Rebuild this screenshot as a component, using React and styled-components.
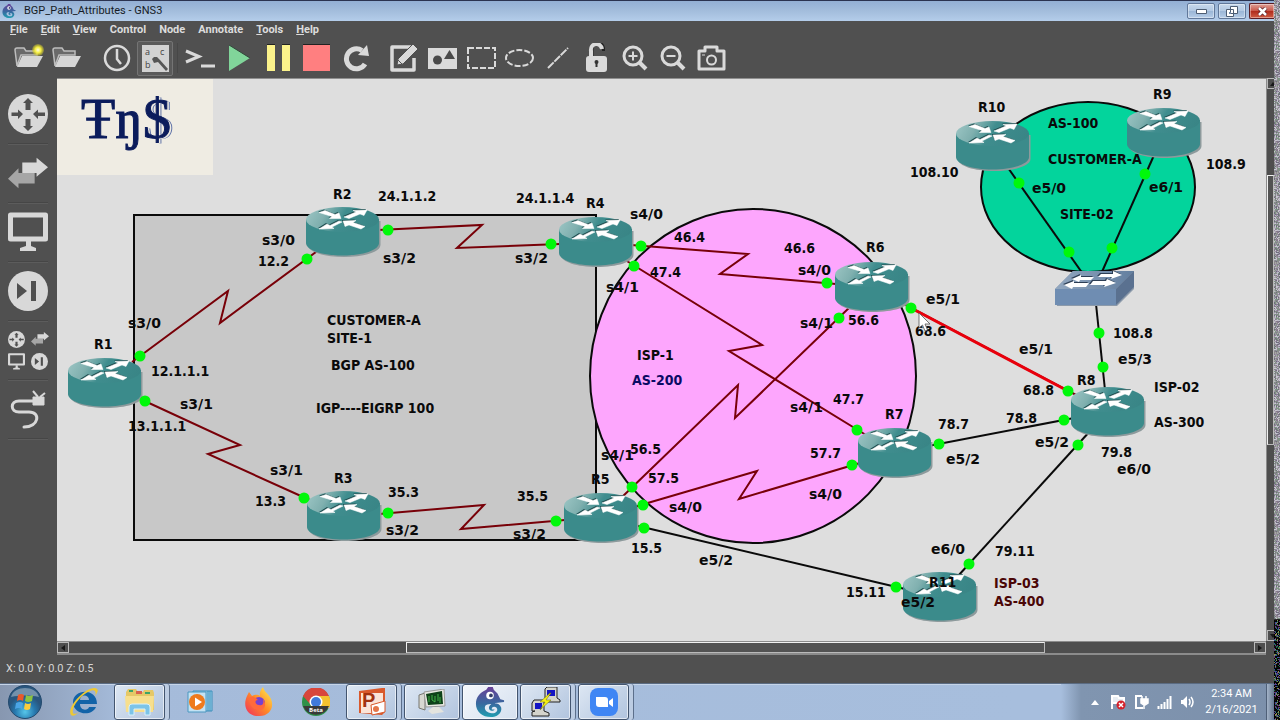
import React from 'react';
import styled, { createGlobalStyle } from 'styled-components'

const GlobalStyle = createGlobalStyle`
  * { box-sizing: border-box; }
  body {
    margin: 0;
    font-family: Roboto, "Open Sans", sans-serif;
    font-size: 11px;
    background: #505050;
  }
  button {
    font: inherit;
    color: inherit;
    border: 0;
    padding: 0;
    background: none;
  }
  svg { display: block; }
`

const Desktop = styled.div`
  display: flex;
  height: 100vh;
  overflow: hidden;
`

const Screen = styled.div`
  flex: 1;
  min-width: 0;
  display: flex;
  flex-direction: column;
`

const EdgeStrip = styled.svg`
  flex: none;
  width: 6px;
  height: 100%;
`

/* ---------- window ---------- */

const AppWindow = styled.main`
  flex: 1;
  min-height: 0;
  display: flex;
  flex-direction: column;
  background: #505050;
`

const TitleBar = styled.header`
  display: flex;
  align-items: center;
  height: 21px;
  padding-left: 2px;
  gap: 8px;
  border-top: 1px solid #2b3350;
  background: linear-gradient(#93afd4, #a3bddc 50%, #b4cdea);
`

const Title = styled.h1`
  flex: 1;
  margin: 0;
  font-size: 11px;
  line-height: 18px;
  font-weight: 400;
  color: #161c26;
`

const WindowButtons = styled.div`
  display: flex;
  gap: 3px;
`

const WindowButton = styled.button`
  display: flex;
  align-items: center;
  justify-content: center;
  width: ${props => props.$close ? 25 : 28}px;
  height: 16px;
  border: 1px solid ${props => props.$close ? '#5b1d24' : '#61789a'};
  border-right-width: ${props => props.$close ? 0 : 1}px;
  border-radius: ${props => props.$close ? '2px 0 0 2px' : '2px'};
  background: ${props => props.$close
    ? 'linear-gradient(#dda097, #c9594b 48%, #b02c1d 52%, #cf5c43)'
    : 'linear-gradient(#c7d8ec, #b3c9e3 48%, #9bb6d6 52%, #b6cde8)'};
  box-shadow: inset 0 0 0 1px rgba(255, 255, 255, 0.4);
`

const MenuBar = styled.nav`
  display: flex;
  height: 18px;
  padding-left: 4px;
`

const MenuButton = styled.button`
  padding: 0 7px 0 6px;
  font-size: 11px;
  line-height: 18px;
  font-weight: 700;
  color: #dcdcdc;
`

const ToolBar = styled.div`
  display: flex;
  align-items: center;
  height: 39px;
  padding-bottom: 1px;
`

const Handle = styled.div`
  flex: none;
  width: ${props => props.$row ? 18 : 5}px;
  height: ${props => props.$row ? 5 : 17}px;
  margin: ${props => props.$margin};
  background-image: radial-gradient(circle, #a0a0a0 40%, transparent 50%);
  background-size: 2px 2px;
`

const ToolGroup = styled.div`
  display: flex;
  flex: none;
  width: ${props => props.$width}px;
`

const ToolButton = styled.button`
  flex: 1;
  height: 36px;
  display: flex;
  align-items: center;
  justify-content: center;
  color: #dadada;
`

const PressedFrame = styled.span`
  display: flex;
  align-items: center;
  justify-content: center;
  width: 36px;
  height: 35px;
  border: 1px solid #747474;
  border-radius: 2px;
  background: #5a5a5a;
`

const Divider = styled.div`
  width: 1px;
  height: 30px;
  margin: 0 3px 0 3px;
  background: #474747;
`

const Workspace = styled.div`
  flex: 1;
  min-height: 0;
  display: grid;
  grid-template-columns: 57px minmax(0, 1fr) 8px;
  grid-template-rows: minmax(0, 1fr) 14px;
`

const SideBar = styled.aside`
  grid-row: 1 / 3;
  display: flex;
  flex-direction: column;
  align-items: center;
  padding: 2px 1px 0 0;
`

const SideButton = styled.button`
  display: flex;
  align-items: center;
  justify-content: center;
  width: 40px;
  height: 59px;
  color: #d8d8d8;
  border-bottom: 1px solid #464646;
  box-shadow: 0 1px 0 #5c5c5c;
`

const Scroller = styled.div`
  display: flex;
  flex-direction: ${props => props.$vertical ? 'column' : 'row'};
  border: solid #8b8b8b;
  border-width: ${props => props.$vertical ? '0 0 0 1px' : '1px 0 2px 0'};
  background: #4e4e4e;
  overflow: hidden;
`

const ScrollArrow = styled.button`
  flex: none;
  display: flex;
  align-items: center;
  justify-content: center;
  width: 12px;
  height: 11px;
  border: 1px solid #b9b9b9;
  color: #181818;
`

const ScrollTrack = styled.div`
  flex: ${props => props.$size} 1 0;
`

const ScrollThumb = styled.div`
  flex: ${props => props.$size} 1 0;
  border: 1px solid #b9b9b9;
  border-left-color: #f0f0f0;
  border-top-color: #f0f0f0;
  background: #525252;
`

const StatusBar = styled.footer`
  height: 28px;
  padding: 5px 6px;
  font-size: 11px;
  line-height: 18px;
  color: #d6d6d6;
`

/* ---------- topology ---------- */

const Stage = styled.section`
  position: relative;
  overflow: hidden;
  border-top: 1px solid #8f8f8f;
  background: #dedede;
`

const Links = styled.svg`
  position: absolute;
  left: 0;
  top: 0;
`

const Node = styled.div`
  position: absolute;
  left: ${props => props.$x}px;
  top: ${props => props.$y}px;
`

const Label = styled.span`
  position: absolute;
  left: ${props => props.$x}px;
  top: ${props => props.$y - 9}px;
  font-family: ${props => props.$port
    ? '"DejaVu Sans", sans-serif'
    : '"DejaVu Sans Condensed", "DejaVu Sans", sans-serif'};
  font-size: 14px;
  line-height: 18px;
  font-weight: 700;
  white-space: pre;
  color: ${props => props.$color || '#0a0a0a'};
`

const Banner = styled.div`
  width: 156px;
  height: 96px;
  padding: 10px 24px;
  font-family: "Liberation Serif", serif;
  font-size: 56px;
  line-height: 60px;
  color: #0b1c5c;
  -webkit-text-stroke: 1px #0b1c5c;
  background: #efece3;
`

const Dollar = styled.span`
  text-shadow: 2px 1px 0 #efece3, 3px 1px 0 #5a6ea6;
`

/* ---------- taskbar ---------- */

const TaskBar = styled.footer`
  display: flex;
  height: 37px;
  border-top: 1px solid #5b6c83;
  background: linear-gradient(90deg, #8797b0, #a5bbda 120px, #a7bedd 80%, #a7bedd);
  box-shadow: inset 0 1px 0 #c5d4e8;
`

const StartButton = styled.button`
  width: 56px;
  padding-left: 8px;
`

const TaskItems = styled.div`
  flex: 1;
  display: flex;
  gap: 2px;
`

const TaskButton = styled.button`
  display: flex;
  width: 56px;
`

const TaskFace = styled.span`
  flex: 1;
  height: 36px;
  display: flex;
  align-items: center;
  justify-content: center;
  border: ${props => props.$open ? '1px solid #43556f' : '0'};
  border-radius: 3px;
  background: ${props => props.$active
    ? 'linear-gradient(135deg, #f4f7fb, #d4e0ef)'
    : props.$open ? 'linear-gradient(135deg, #dde7f3, #b1c4de)' : 'none'};
  box-shadow: ${props => props.$open ? 'inset 0 0 0 1px rgba(255, 255, 255, 0.6)' : 'none'};
`

const TaskStack = styled.span`
  width: 5px;
  height: 36px;
  border-right: 1px solid #5c6f8b;
  border-radius: 0 3px 3px 0;
  background: #bccce2;
`

const Tray = styled.div`
  display: flex;
  align-items: center;
  gap: 3px;
  padding-left: 24px;
  background: linear-gradient(90deg, #a7bedd, #8095b0 20px, #7c90ab);
`

const TrayButton = styled.button`
  width: 20px;
  display: flex;
  justify-content: center;
`

const Clock = styled.time`
  display: flex;
  flex-direction: column;
  width: 63px;
  font-size: 11px;
  line-height: 16px;
  text-align: center;
  color: #fff;
`

const ShowDesktop = styled.button`
  width: 8px;
  height: 36px;
  border-left: 1px solid #4f6078;
  background: linear-gradient(90deg, #a3b3c8, #65778f);
`

/* ---------- data ---------- */

// scene coordinate shown in the top left corner of the view
const ORIGIN = { x: 57, y: 79 }

const ROUTERS = [
  ['R1', 68, 358], ['R2', 306, 207], ['R3', 307, 491], ['R4', 559, 217],
  ['R5', 564, 493], ['R6', 835, 262], ['R7', 858, 428], ['R8', 1071, 387],
  ['R9', 1127, 108], ['R10', 956, 121], ['R11', 903, 572],
]

const SERIAL = '#780008'
const ETHERNET = '#0a0a0a'

const LINKS = [
  { points: '132,362 228,291 220,323 320,249', color: SERIAL, ends: [[140, 356], [307, 259]] },
  { points: '136,397 240,445 208,454 312,501', color: SERIAL, ends: [[145, 401], [304, 498]] },
  { points: '378,230 482,225 457,248 560,244', color: SERIAL, ends: [[388, 230], [551, 244]] },
  { points: '379,514 484,505 461,529 565,520', color: SERIAL, ends: [[388, 513], [556, 521]] },
  { points: '631,245 748,254 720,274 836,284', color: SERIAL, ends: [[641, 246], [827, 283]] },
  { points: '622,258 762,345 729,351 866,435', color: SERIAL, ends: [[634, 266], [857, 430]] },
  { points: '620,499 738,385 735,418 852,305', color: SERIAL, ends: [[632, 487], [839, 318]] },
  { points: '634,507 757,471 739,499 860,463', color: SERIAL, ends: [[643, 505], [852, 465]] },
  { points: '634,525 905,589', color: ETHERNET, ends: [[644, 528], [896, 587]] },
  { points: '928,446 1074,418', color: ETHERNET, ends: [[939, 444], [1064, 420]] },
  { points: '900,302 1078,396', color: SERIAL, ends: [] },
  { points: '911,308 1068,391', color: '#e8000c', width: 3, ends: [[911, 308], [1068, 391]] },
  { points: '1091,430 958,576', color: ETHERNET, ends: [[1078, 445], [969, 564]] },
  { points: '1096,304 1105,390', color: ETHERNET, ends: [[1099, 333], [1103, 367]] },
  { points: '1006,165 1083,274', color: ETHERNET, ends: [[1019, 183], [1069, 252]] },
  { points: '1155,153 1101,274', color: ETHERNET, ends: [[1145, 174], [1112, 248]] },
]

const LABELS = [
  ['R1', 94, 344], ['R2', 333, 194], ['R3', 334, 478], ['R4', 586, 203],
  ['R5', 591, 479], ['R6', 866, 247], ['R7', 885, 414], ['R8', 1077, 380],
  ['R9', 1153, 94], ['R10', 978, 107], ['R11', 929, 582],
  ['24.1.1.2', 378, 196], ['24.1.1.4', 516, 198], ['46.4', 674, 237], ['46.6', 784, 248],
  ['47.4', 650, 272], ['68.6', 915, 331], ['56.6', 848, 320], ['108.10', 910, 172],
  ['108.9', 1206, 164], ['12.2', 258, 261], ['12.1.1.1', 151, 371], ['13.1.1.1', 128, 426],
  ['13.3', 255, 501], ['35.3', 388, 492], ['35.5', 517, 496], ['56.5', 630, 449],
  ['57.5', 648, 478], ['57.7', 810, 453], ['47.7', 833, 399], ['78.7', 938, 424],
  ['78.8', 1006, 418], ['68.8', 1023, 390], ['79.8', 1101, 452], ['108.8', 1113, 333],
  ['15.5', 631, 548], ['15.11', 846, 592], ['79.11', 995, 551],
  ['s3/0', 128, 323], ['s3/0', 262, 240], ['s3/2', 383, 258], ['s3/2', 515, 258],
  ['s3/1', 180, 404], ['s3/1', 270, 470], ['s3/2', 386, 530], ['s3/2', 513, 534],
  ['s4/0', 630, 214], ['s4/0', 798, 270], ['s4/1', 606, 287], ['s4/1', 800, 323],
  ['s4/1', 601, 455], ['s4/0', 669, 507], ['s4/0', 809, 494], ['s4/1', 790, 407],
  ['e5/1', 926, 299], ['e5/1', 1019, 349], ['e5/0', 1032, 188], ['e6/1', 1149, 187],
  ['e5/2', 946, 459], ['e5/2', 1035, 442], ['e5/3', 1118, 359], ['e6/0', 1117, 469],
  ['e5/2', 699, 560], ['e5/2', 901, 602], ['e6/0', 931, 549],
  ['CUSTOMER-A', 327, 320], ['SITE-1', 327, 338], ['BGP AS-100', 331, 365],
  ['IGP----EIGRP 100', 316, 408], ['ISP-1', 637, 355], ['AS-200', 632, 380, '#0a0a64'],
  ['AS-100', 1048, 123], ['CUSTOMER-A', 1048, 159], ['SITE-02', 1060, 214],
  ['ISP-02', 1154, 387], ['AS-300', 1154, 422],
  ['ISP-03', 994, 583, '#4a0606'], ['AS-400', 994, 601, '#4a0606'],
]

const MENUS = [
  ['F', 'ile'], ['E', 'dit'], ['V', 'iew'], ['', 'Control'],
  ['', 'Node'], ['', 'Annotate'], ['T', 'ools'], ['H', 'elp'],
]

/* ---------- drawings ---------- */

const Svg = ({ w, h = w, children, ...rest }) => (
  <svg width={w} height={h} viewBox={`0 0 ${w} ${h}`} fill="none" aria-hidden="true" {...rest}>{children}</svg>
)

const ROUTER_ARROWS = 'M13 5.500L19 3.500L29 7.500L33 6L35 11.500L23.500 11.500L26 9.500ZM38 10L50 5L47 3.500L61 3L58 8.500L54 7L43 11.500ZM33 14L24 18.500L21 17L13 22L28 21.500L26 20L36 15ZM37 14L50 13.500L47 15.500L59 19.500L55 22L43 18L39 19.500Z'

const RouterIcon = () => (
  <Svg w={75} h={51}>
    <path d="M2 14V38C2 45 18 50 38 50S74.500 45 74.500 38V14Z" fill="#8d9a9c" />
    <path d="M0 12V36C0 43 16 48.500 36.500 48.500S73 43 73 36V12Z" fill="#3b8b8b" />
    <ellipse cx="36.500" cy="12.500" rx="36.500" ry="12.500" fill="url(#routerTop)" />
    <path d={ROUTER_ARROWS} transform="translate(-1 -1)" fill="#1d4b4d" />
    <path d={ROUTER_ARROWS} fill="#fff" stroke="#fff" strokeWidth=".5" />
  </Svg>
)

const SwitchIcon = () => (
  <Svg w={80} h={36}>
    <path d="M0 18L18 0H79V18L62 35H2Z" fill="#8c9aaa" />
    <path d="M0 18L18 0H79L61 18Z" fill="url(#switchTop)" />
    <path d="M0 18H61V34H0Z" fill="#6f8db2" />
    <path d="M61 18L79 0V16L61 34Z" fill="#5a7190" />
    <path d="M17 8L26 4V6H39L36 9H25L24 11ZM67 4L58 0V3H46L43 6H57L56 8ZM9 14L19 10V12H34L31 16H18L17 18ZM61 12L52 8L51 10H38L35 14H50L49 16Z" transform="translate(-1 -1)" fill="#2e3f55" />
    <path d="M17 8L26 4V6H39L36 9H25L24 11ZM67 4L58 0V3H46L43 6H57L56 8ZM9 14L19 10V12H34L31 16H18L17 18ZM61 12L52 8L51 10H38L35 14H50L49 16Z" fill="#fff" />
  </Svg>
)

const Chameleon = ({ size }) => (
  <svg width={size} height={size} viewBox="0 0 32 32" fill="none" aria-hidden="true">
    <defs>
      <linearGradient id="cham" x1="0" y1="0" x2="0" y2="1">
        <stop offset="0" stopColor="#694098" /><stop offset="0.55" stopColor="#38699f" /><stop offset="1" stopColor="#209db0" />
      </linearGradient>
    </defs>
    <path d="M12 3L14 0H19L20 3L24 7L27 13L31 14V16L22 17C20 19 13 17 11 20C9 24 13 28 18 28C23 28 25 25 23 22C21 20 17 21 18 24L21 24C19 27 14 25 15 21C17 16 26 16 28 22C29 28 23 32 17 32C8 32 1 26 1 18C1 11 5 6 12 3Z" fill="url(#cham)" />
    <circle cx="16" cy="9" r="4" fill="#fff" /><circle cx="17" cy="9" r="2" fill="#333c69" />
  </svg>
)

const Folder = ({ spark }) => (
  <Svg w={30} h={28}>
    <path d="M1 6Q1 4 3 4H10L12 7H23V11H7L3 22Z" stroke="#bdbdbd" strokeWidth="1.500" fill="#6a6a6a" />
    <path d="M8 12H29L23 23H3Z" fill="#d6d6d6" />
    {spark && <circle cx="24" cy="6" r="6" fill="url(#spark)" />}
  </Svg>
)

const ClockIcon = () => (
  <Svg w={28}><circle cx="14" cy="14" r="12" stroke="currentColor" strokeWidth="2.500" /><path d="M14 5V15L18 20" stroke="currentColor" strokeWidth="2.500" /></Svg>
)

const SvgText = styled.text`
  font: 400 9px "Open Sans", sans-serif;
  fill: #444;
`

const LabelsIcon = () => (
  <Svg w={27}>
    <path d="M0 0H27V27H0Z" fill="#d2d2d2" />
    <SvgText x="3" y="10">a</SvgText><SvgText x="18" y="10">c</SvgText><SvgText x="3" y="23">b</SvgText>
    <path d="M10 14L12 12L15 12L18 15L26 24L24 26L16 17L12 18Z" fill="#555" />
  </Svg>
)

const ConsoleIcon = () => (
  <Svg w={30} h={22}><path d="M1 4L14 9.500L1 15" stroke="currentColor" strokeWidth="3" /><path d="M16 19H30" stroke="currentColor" strokeWidth="3" /></Svg>
)
const PlayIcon = () => <Svg w={22} h={28}><path d="M1 1L22 14L1 27Z" fill="#81d59a" /><path d="M1 1L22 14" stroke="#31483a" /></Svg>
const PauseIcon = () => <Svg w={24} h={28}><path d="M1 1H9V27H1ZM16 1H24V27H16Z" fill="#fbf28b" /><path d="M1 .5H9M16 .5H24" stroke="#222" /></Svg>
const StopIcon = () => <Svg w={27} h={28}><path d="M0 1H27V27H0Z" fill="#ff7f80" /><path d="M0 .5H27" stroke="#222" /></Svg>
const ReloadIcon = () => (
  <Svg w={28}><path d="M20 6.500A10 10 0 1 0 23 20" stroke="currentColor" strokeWidth="5" /><path d="M25 1L27 12L16 11Z" fill="currentColor" /></Svg>
)
const NoteIcon = () => (
  <Svg w={30} h={28}>
    <path d="M22 3H3V26H25V14" stroke="currentColor" strokeWidth="3.500" strokeLinejoin="round" />
    <path d="M9 15L24 0L29 5L14 20L8 21Z" fill="currentColor" stroke="#505050" /><path d="M9 16L13 20" stroke="#505050" />
  </Svg>
)
const ImageIcon = () => (
  <Svg w={29} h={21}><path d="M0 0H29V21H0Z" fill="currentColor" /><circle cx="9.500" cy="12" r="4.500" fill="#4a4a4a" /><path d="M16 11L21.500 2L27 11Z" fill="#4a4a4a" /></Svg>
)
const RectIcon = () => <Svg w={29} h={22}><path d="M1 1H28V21H1Z" stroke="currentColor" strokeWidth="2" strokeDasharray="6 2" /></Svg>
const EllipseIcon = () => <Svg w={29} h={18}><ellipse cx="14.500" cy="9" rx="13.500" ry="8" stroke="currentColor" strokeWidth="2" strokeDasharray="6 2" /></Svg>
const LineIcon = () => <Svg w={22}><path d="M1 21L21 1" stroke="currentColor" strokeWidth="2" strokeDasharray="8 1" /></Svg>
const LockIcon = () => (
  <Svg w={23} h={30}>
    <path d="M6 15V8A5.500 6 0 0 1 17.500 6V9" stroke="#222" strokeWidth="3" transform="translate(1 -1)" />
    <path d="M6 15V8A5.500 6 0 0 1 17 6" stroke="currentColor" strokeWidth="4" />
    <rect x="1" y="13" width="21" height="16" rx="3" fill="currentColor" /><path d="M11.500 18V24" stroke="#333" strokeWidth="2" /><circle cx="11.500" cy="19" r="2" fill="#333" />
  </Svg>
)
const ZoomIcon = ({ plus }) => (
  <Svg w={26}>
    <circle cx="11" cy="11" r="9" stroke="currentColor" strokeWidth="3" /><path d="M17 17L24 24" stroke="currentColor" strokeWidth="4" />
    <path d={plus ? 'M6.500 11H15.500M11 6.500V15.500' : 'M6.500 11H15.500'} stroke="currentColor" strokeWidth="2" />
  </Svg>
)
const CameraIcon = () => (
  <Svg w={29} h={26}>
    <path d="M2 6H8V2H20V6H27V24H2Z" stroke="currentColor" strokeWidth="3" strokeLinejoin="round" />
    <circle cx="14.500" cy="15" r="4.500" stroke="currentColor" strokeWidth="2" /><path d="M5 10H8" stroke="currentColor" />
  </Svg>
)

const RouterSide = ({ size = 40 }) => (
  <svg width={size} height={size} viewBox="0 0 40 40" fill="none" aria-hidden="true">
    <circle cx="20" cy="20" r="20" fill="currentColor" />
    <path d="M20 4L25 9H22.500V16H17.500V9H15ZM20 37L15 32H17.500V25H22.500V32H25ZM15 20L10 15.500V18.500H3.500V22H10V25ZM25 20L30 15.500V18.500H37V22H30V25Z" fill="#505050" />
  </svg>
)
const SwitchSide = ({ w = 42 }) => (
  <svg width={w} height={w * 32 / 42} viewBox="0 0 42 32" fill="none" aria-hidden="true">
    <path d="M0 22L11 11V16H28V27H11V32Z" fill="#a6a6a6" /><path d="M42 10L30 0V5H15V16H30V20Z" fill="currentColor" />
  </svg>
)
const MonitorSide = ({ size = 40 }) => (
  <svg width={size} height={size} viewBox="0 0 40 40" fill="none" aria-hidden="true">
    <path d="M2.500 3H37.500V27H2.500Z" stroke="currentColor" strokeWidth="5" strokeLinejoin="round" /><path d="M18 29H23V34L28 36V39H12V36L18 34Z" fill="currentColor" />
  </svg>
)
const EndSide = ({ size = 40 }) => (
  <svg width={size} height={size} viewBox="0 0 40 40" fill="none" aria-hidden="true">
    <circle cx="20" cy="20" r="20" fill="currentColor" /><path d="M9 12L19 20L9 28ZM23 10H28V30H23Z" fill="#505050" />
  </svg>
)

const AllGrid = styled.span`
  display: grid;
  grid-template-columns: 18px 18px;
  gap: 5px;
  align-items: center;
`

const CableSide = () => (
  <Svg w={36} h={40}>
    <path d="M23 12H9C0 12 0 23 9 23H19C31 23 29 38 14 38" stroke="currentColor" strokeWidth="3" strokeLinecap="round" />
    <path d="M23 8H34V16H23Z" fill="currentColor" stroke="currentColor" /><path d="M28 8L23 2M30 8L35 4" stroke="currentColor" strokeWidth="2" />
  </Svg>
)

const Orb = () => (
  <Svg w={34}>
    <circle cx="17" cy="17" r="16.500" fill="url(#orb)" stroke="#244a6e" />
    <path d="M3 12C6 0 28 0 31 12C22 10 12 10 3 12Z" fill="#fff" opacity="0.35" />
    <path d="M10 10Q13 8 16 10L15 16Q12 14 9 16Z" fill="#e9592a" /><path d="M18 10Q21 12 25 10L24 16Q20 18 17 16Z" fill="#8cc441" />
    <path d="M8 18Q12 16 15 18L14 24Q11 22 7 24Z" fill="#4ba5e5" /><path d="M17 18Q20 20 23 18L22 24Q19 26 16 24Z" fill="#fccc3c" />
  </Svg>
)

const IeIcon = () => (
  <Svg w={30}>
    <path d="M27 20C23 30 4 28 4 15S28 0 28 17H11C11 24 19 24 20 20ZM11 13H20C20 7 11 7 11 13Z" fill="#1263a8" fillRule="evenodd" />
    <path d="M2 28C-3 21 16 0 26 1C31 2 28 6 26 9C28 4 25 2 21 4C11 8 2 21 4 26C5 28 9 26 10 25C7 28 4 30 2 28Z" fill="#edc833" />
  </Svg>
)
const ExplorerIcon = () => (
  <Svg w={32} h={28}>
    <path d="M2 4L4 1H12L14 4H19L20 2H29L30 5V22H2Z" fill="#e5c867" /><path d="M5 2H9V4H5ZM21 4H26V6H21Z" fill="#3ca567" /><path d="M12 3H18V6H12Z" fill="#d9614e" />
    <path d="M1 8H30L29 24H2Z" fill="#f7df8d" /><path d="M5 27V19Q5 16 8 16H23Q26 16 26 19V27H21V21H10V27Z" fill="#7cc4e8" stroke="#d8f1fb" />
  </Svg>
)
const MediaIcon = () => (
  <Svg w={26} h={26}>
    <path d="M6 2H25V22H6Z" fill="#9bd0ea" stroke="#3c8fba" /><path d="M21 2V22M23 2V22" stroke="#3c8fba" /><path d="M1 3H19V23H1Z" fill="#c3e2f3" stroke="#4a97c0" />
    <circle cx="10" cy="13" r="8" fill="#ee7b1d" /><path d="M8 8.500L15 13L8 17.500Z" fill="#fff" />
  </Svg>
)
const FirefoxIcon = () => (
  <Svg w={29} h={30}>
    <path d="M3 9L5 5L8 9C12 7 15 8 16 9C15 5 18 1 19 0C20 5 25 7 27 12C31 22 24 30 14 29C4 29-2 20 3 9Z" fill="url(#fox)" />
    <circle cx="15" cy="16" r="6" fill="#7541d1" /><path d="M5 11C9 8 12 11 14 13C10 13 11 18 15 18C19 19 20 16 19 12C23 17 21 23 15 23C9 23 5 18 5 11Z" fill="#ff6a3c" />
  </Svg>
)
const BetaText = styled.text`
  font: 700 6px "Open Sans", sans-serif;
  fill: #fff;
  text-anchor: middle;
`
const ChromeIcon = () => (
  <Svg w={28}>
    <circle cx="14" cy="14" r="14" fill="#2d9149" /><path d="M1 8A14 14 0 0 1 27 8H14L9 17Z" fill="#d8463c" /><path d="M14 8H27A14 14 0 0 1 27 20H14Z" fill="#f3c22f" />
    <circle cx="14" cy="14" r="6.500" fill="#fff" /><circle cx="14" cy="14" r="5" fill="#4079db" />
    <path d="M1 18H27A14 14 0 0 1 1 18Z" fill="#393939" /><BetaText x="14" y="24">Beta</BetaText>
  </Svg>
)
const PptText = styled.text`
  font: 700 20px "Liberation Sans", sans-serif;
  fill: #a3320f;
`
const PptIcon = () => (
  <Svg w={28}>
    <path d="M1 3L24 0H27V24L24 27L1 25Z" fill="#d9592c" /><path d="M3 5H25V25H3Z" fill="#fbe4d7" /><PptText x="4" y="19">P</PptText>
    <path d="M13 17L27 13V24L14 27Z" fill="#fff" stroke="#d9592c" /><circle cx="18" cy="21" r="3" fill="#e4764a" />
  </Svg>
)
const PcIcon = () => (
  <Svg w={28} h={26}>
    <path d="M1 6L7 4V21L1 19Z" fill="#d8d8d2" stroke="#77776f" /><path d="M6 3L26 0L27 17L8 18Z" fill="#e9e9e3" stroke="#999" /><path d="M8 5L24 2L25 15L10 16Z" fill="#0e4219" />
    <path d="M11 7V13M14 6V11L17 13V7M20 5V12M22 8V14" stroke="#42b248" /><path d="M15 18H21L26 23L14 25L10 22Z" fill="#e4e4de" />
  </Svg>
)
const PuttyIcon = () => (
  <Svg w={30} h={30}>
    <path d="M14 2L16 0H26V11L29 13V15H14V12L16 11H14ZM1 16L3 13H13V24L18 26V29H1V25L4 24H1Z" fill="#d4d4cc" stroke="#222" /><path d="M16 3H24V9H16ZM4 16H11V22H4Z" fill="#1414c4" />
    <path d="M19 6L9 15L14 15L9 23L20 13H15L20 6Z" fill="#f5f112" stroke="#70700c" strokeWidth=".5" />
  </Svg>
)
const ZoomApp = () => (
  <Svg w={28}><rect width="28" height="28" rx="8" fill="#3f86f4" /><path d="M6 9H15Q18 9 18 12V19H9Q6 19 6 16ZM19 13L23 10V19L19 16Z" fill="#fff" /></Svg>
)

const TASKS = [
  { name: 'Internet Explorer', icon: <IeIcon /> },
  { name: 'Windows Explorer', icon: <ExplorerIcon />, open: true, stack: true },
  { name: 'Media Player', icon: <MediaIcon /> },
  { name: 'Firefox', icon: <FirefoxIcon /> },
  { name: 'Chrome Beta', icon: <ChromeIcon /> },
  { name: 'PowerPoint', icon: <PptIcon />, open: true, stack: true },
  { name: 'Task Manager', icon: <PcIcon />, open: true },
  { name: 'GNS3', icon: <Chameleon size={30} />, open: true, active: true },
  { name: 'PuTTY', icon: <PuttyIcon />, open: true, stack: true },
  { name: 'Zoom', icon: <ZoomApp />, open: true, stack: true },
]

const TRAY = [
  ['Show hidden icons', <Svg w={8} h={5}><path d="M0 5L4 0L8 5Z" fill="#fff" /></Svg>],
  ['Action Center', <Svg w={16} h={16}><path d="M2 1V15M3 2H8L9 4H14V9H3" stroke="#fff" strokeWidth="2" fill="#e8edf3" /><circle cx="11" cy="11" r="4.500" fill="#d3222c" /><path d="M9 9L13 13M13 9L9 13" stroke="#fff" strokeWidth="1.500" /></Svg>],
  ['Power', <Svg w={15} h={16}><path d="M8 2H2V14H9" stroke="#fff" strokeWidth="2" /><path d="M7 5H14V9L11 11H10L7 9ZM8 2V5M12 2V5M10 11V15" fill="#fff" stroke="#fff" strokeWidth="1.500" /></Svg>],
  ['Network', <Svg w={15} h={13}><path d="M1.500 13V10M4.500 13V8M7.500 13V6M10.500 13V3M13.500 13V0" stroke="#fff" strokeWidth="2" /></Svg>],
  ['Volume', <Svg w={15} h={14}><path d="M1 5H3L7 1V13L3 9H1Z" fill="#fff" /><path d="M9 4Q11 7 9 10M11 2Q15 7 11 12" stroke="#fff" strokeWidth="1.500" /></Svg>],
]

const SharedDefs = () => (
  <defs>
    <linearGradient id="routerTop" x1="0" y1="0.3" x2="1" y2="0.5">
      <stop offset="0" stopColor="#99c3c2" /><stop offset="0.25" stopColor="#80b0af" /><stop offset="0.5" stopColor="#3f8d8e" /><stop offset="1" stopColor="#398586" />
    </linearGradient>
    <linearGradient id="switchTop" x1="0" y1="0" x2="1" y2="0">
      <stop offset="0" stopColor="#93a8c0" /><stop offset="1" stopColor="#627e9f" />
    </linearGradient>
    <radialGradient id="spark"><stop offset="0" stopColor="#fffde0" /><stop offset="0.5" stopColor="#f4ed3d" /><stop offset="1" stopColor="#c6be2b" stopOpacity="0.4" /></radialGradient>
    <radialGradient id="orb" cx="0.5" cy="0.8"><stop offset="0" stopColor="#56c6ea" /><stop offset="0.6" stopColor="#2678ae" /><stop offset="1" stopColor="#29567e" /></radialGradient>
    <linearGradient id="fox" x1="1" y1="0" x2="0" y2="1"><stop offset="0.1" stopColor="#ffe14b" /><stop offset="0.5" stopColor="#ff8a27" /><stop offset="1" stopColor="#ef2a61" /></linearGradient>
  </defs>
)

const speckle = (colors, rows, seed) => {
  const cells = []
  let n = seed
  for (let i = 0; i < rows * 6; i++) {
    n = (n * 1103515245 + 12345) % 2147483648
    cells.push(<rect key={i} x={i % 6} y={Math.floor(i / 6)} width="1" height="1" fill={colors[Math.floor(n / 65536) % colors.length]} />)
  }
  return cells
}

const Edge = () => (
  <EdgeStrip aria-hidden="true">
    <defs>
      <pattern id="lightNoise" width="6" height="90" patternUnits="userSpaceOnUse">
        {speckle(['#8c8c8c', '#9b8fa6', '#c8c4d0', '#6f6f7c', '#a6a6a6', '#85798c', '#7d9682', '#b9b9c6'], 90, 7)}
      </pattern>
      <pattern id="darkNoise" width="6" height="80" patternUnits="userSpaceOnUse">
        {speckle(['#000', '#0b0b0b', '#121212', '#1f6b50', '#000', '#6d3a7c', '#3355a0', '#050505', '#8c8c50'], 80, 11)}
      </pattern>
    </defs>
    <rect width="100%" height="100%" fill="url(#lightNoise)" />
    <rect y="86%" width="100%" height="14%" fill="url(#darkNoise)" />
  </EdgeStrip>
)

const Topology = () => (
  <Stage aria-label="Topology">
    <Banner>Ŧŋ<Dollar>$</Dollar></Banner>
    <Links width="1300" height="640" viewBox={`${ORIGIN.x} ${ORIGIN.y} 1300 640`} aria-hidden="true">
      <SharedDefs />
      <rect x="134" y="215" width="462" height="325" fill="#c8c8c8" stroke="#0a0a0a" strokeWidth="2" />
      <ellipse cx="753" cy="376" rx="163" ry="167" fill="#fda6fd" stroke="#0a0a0a" strokeWidth="2" />
      <ellipse cx="1088" cy="187" rx="107" ry="85" fill="#03d49c" stroke="#0a0a0a" strokeWidth="2" />
      {LINKS.map((link, index) => (
        <polyline key={index} points={link.points} fill="none" stroke={link.color} strokeWidth={link.width || 2} />
      ))}
    </Links>
    {ROUTERS.map(([name, x, y]) => (
      <Node key={name} $x={x - ORIGIN.x} $y={y - ORIGIN.y}><RouterIcon /></Node>
    ))}
    <Node $x={1055 - ORIGIN.x} $y={271 - ORIGIN.y}><SwitchIcon /></Node>
    <Links width="1300" height="640" viewBox={`${ORIGIN.x} ${ORIGIN.y} 1300 640`} aria-hidden="true">
      {LINKS.flatMap(link => link.ends).map(([x, y]) => (
        <circle key={`${x}-${y}`} cx={x} cy={y} r="5.500" fill="#00f80a" />
      ))}
    </Links>
    {LABELS.map(([text, x, y, color], index) => (
      <Label key={index} $x={x - ORIGIN.x} $y={y - ORIGIN.y} $color={color} $port={text.includes('/')}>{text}</Label>
    ))}
    <Node $x={918 - ORIGIN.x} $y={312 - ORIGIN.y}>
      <Svg w={13} h={20}><path d="M1 1V16L4.500 13L7 19L9.500 18L7 12H12Z" fill="#fff" stroke="#555" strokeWidth=".8" /></Svg>
    </Node>
  </Stage>
)

const Arrow = ({ d }) => <Svg w={6}><path d={d} fill="currentColor" /></Svg>

const Tool = ({ name, children }) => <ToolButton aria-label={name}>{children}</ToolButton>

class App extends React.Component {
  render() {
    return (
      <Desktop>
        <GlobalStyle />
        <Screen>
          <AppWindow>
            <TitleBar>
              <Chameleon size={14} />
              <Title>BGP_Path_Attributes - GNS3</Title>
              <WindowButtons>
                <WindowButton aria-label="Minimize"><Svg w={11} h={5}><path d="M.5 .5H10.500V4.500H.5Z" fill="#fff" stroke="#4d5d73" /></Svg></WindowButton>
                <WindowButton aria-label="Restore">
                  <Svg w={12} h={11}><path d="M4.500 .5H11.500V7.500H4.500ZM.5 3.500H7.500V10.500H.5Z" fill="#fff" stroke="#4d5d73" /><path d="M3 6H5V8H3Z" fill="#7187a5" /></Svg>
                </WindowButton>
                <WindowButton $close aria-label="Close"><Svg w={11} h={9}><path d="M2 1L9 8M9 1L2 8" stroke="#5b1d24" strokeWidth="4" /><path d="M2 1L9 8M9 1L2 8" stroke="#fff" strokeWidth="2.500" /></Svg></WindowButton>
              </WindowButtons>
            </TitleBar>
            <MenuBar>
              {MENUS.map(([key, rest]) => <MenuButton key={rest}><u>{key}</u>{rest}</MenuButton>)}
            </MenuBar>
            <ToolBar>
              <Handle $margin="0 3px 0 2px" />
              <ToolGroup $width={76}>
                <Tool name="New project"><Folder spark /></Tool>
                <Tool name="Open project"><Folder /></Tool>
              </ToolGroup>
              <Handle $margin="0 3px 0 4px" />
              <ToolGroup $width={76}>
                <Tool name="Snapshots"><ClockIcon /></Tool>
                <Tool name="Show interface labels"><PressedFrame><LabelsIcon /></PressedFrame></Tool>
              </ToolGroup>
              <Divider />
              <ToolGroup $width={194}>
                <Tool name="Console"><ConsoleIcon /></Tool>
                <Tool name="Start"><PlayIcon /></Tool>
                <Tool name="Pause"><PauseIcon /></Tool>
                <Tool name="Stop"><StopIcon /></Tool>
                <Tool name="Reload"><ReloadIcon /></Tool>
              </ToolGroup>
              <Handle $margin="0 2px 0 3px" />
              <ToolGroup $width={346}>
                <Tool name="Add note"><NoteIcon /></Tool>
                <Tool name="Insert picture"><ImageIcon /></Tool>
                <Tool name="Draw rectangle"><RectIcon /></Tool>
                <Tool name="Draw ellipse"><EllipseIcon /></Tool>
                <Tool name="Draw line"><LineIcon /></Tool>
                <Tool name="Lock items"><LockIcon /></Tool>
                <Tool name="Zoom in"><ZoomIcon plus /></Tool>
                <Tool name="Zoom out"><ZoomIcon /></Tool>
                <Tool name="Screenshot"><CameraIcon /></Tool>
              </ToolGroup>
            </ToolBar>
            <Workspace>
              <SideBar>
                <Handle $row $margin="0" />
                <SideButton aria-label="Routers"><RouterSide /></SideButton>
                <SideButton aria-label="Switches"><SwitchSide /></SideButton>
                <SideButton aria-label="End devices"><MonitorSide /></SideButton>
                <SideButton aria-label="Security devices"><EndSide /></SideButton>
                <SideButton aria-label="All devices">
                  <AllGrid><RouterSide size={17} /><SwitchSide w={18} /><MonitorSide size={17} /><EndSide size={17} /></AllGrid>
                </SideButton>
                <SideButton aria-label="Add a link"><CableSide /></SideButton>
              </SideBar>
              <Topology />
              <Scroller $vertical>
                <ScrollArrow aria-label="Scroll up"><Arrow d="M0 5L3 1L6 5Z" /></ScrollArrow>
                <ScrollTrack $size={86} />
                <ScrollThumb $size={267} />
                <ScrollTrack $size={185} />
                <ScrollArrow aria-label="Scroll down"><Arrow d="M0 1L3 5L6 1Z" /></ScrollArrow>
              </Scroller>
              <Scroller>
                <ScrollArrow aria-label="Scroll left"><Arrow d="M5 0L1 3L5 6Z" /></ScrollArrow>
                <ScrollTrack $size={337} />
                <ScrollThumb $size={638} />
                <ScrollTrack $size={209} />
                <ScrollArrow aria-label="Scroll right"><Arrow d="M1 0L5 3L1 6Z" /></ScrollArrow>
              </Scroller>
            </Workspace>
            <StatusBar>X: 0.0 Y: 0.0 Z: 0.5</StatusBar>
          </AppWindow>
          <TaskBar>
            <StartButton aria-label="Start"><Orb /></StartButton>
            <TaskItems>
              {TASKS.map(task => (
                <TaskButton key={task.name} aria-label={task.name}>
                  <TaskFace $open={task.open} $active={task.active}>{task.icon}</TaskFace>
                  {task.stack && <TaskStack />}
                </TaskButton>
              ))}
            </TaskItems>
            <Tray>
              {TRAY.map(([name, icon]) => <TrayButton key={name} aria-label={name}>{icon}</TrayButton>)}
              <Clock><span>2:34 AM</span><span>2/16/2021</span></Clock>
              <ShowDesktop aria-label="Show desktop" />
            </Tray>
          </TaskBar>
        </Screen>
        <Edge />
      </Desktop>
    );
  }
}

export default App;
